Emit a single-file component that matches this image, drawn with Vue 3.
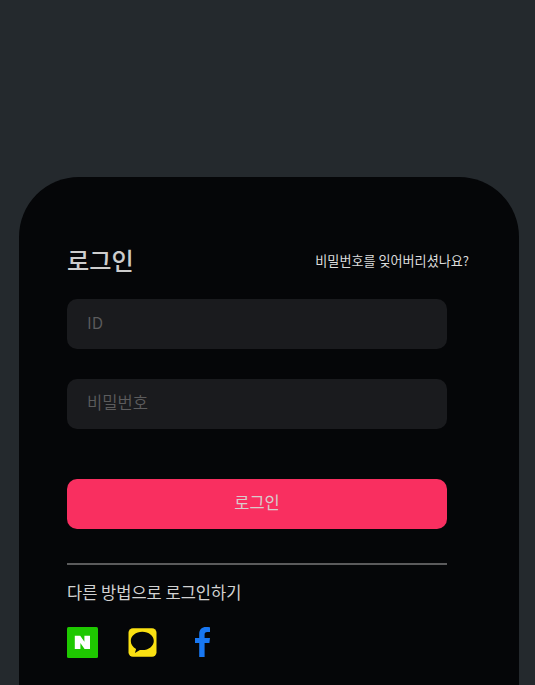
<template>
  <div class="page">
    <main class="login-card">
      <header class="head">
        <h1 class="title">로그인</h1>
        <a class="forgot">비밀번호를 잊어버리셨나요?</a>
      </header>

      <form class="form" @submit.prevent>
        <input v-model="userId" class="field" type="text" placeholder="ID" />
        <input v-model="password" class="field" type="password" placeholder="비밀번호" />
        <button class="submit" type="submit">로그인</button>
      </form>

      <section class="other">
        <p class="other-text">다른 방법으로 로그인하기</p>
        <div class="socials">
          <svg class="naver" viewBox="0 0 31 31" aria-label="Naver">
            <rect width="31" height="31" rx="1.5" fill="#1ec800" />
            <path d="M7.800 8.700h5.400l4.200 6V8.700h5.600v13.400h-5.400l-4.200-6v6H7.800z" fill="#fff" />
          </svg>
          <svg class="kakao" viewBox="0 0 29 29" aria-label="Kakao">
            <rect x=".5" y=".3" width="28" height="28.400" rx="4.500" fill="#fae012" />
            <path
              d="M14.3 3.8C7.9 3.8 2.8 7.8 2.8 13c0 3.4 2.100 6.200 5.300 7.900l-1.200 4.200 5-3.200c.8.1 1.600.2 2.400.2 6.400 0 11.500-4 11.500-9.100s-5.100-9.200-11.500-9.200z"
              fill="#050608"
            />
          </svg>
          <svg class="facebook" viewBox="0 0 15 30" aria-label="Facebook">
            <path
              d="M15 .2v4.9h-2.700C10.200 5.100 9.600 6 9.600 7.500V11H15l-.6 5H9.600v14H4.200V16H0v-5h4.200V6.900C4.200 2.400 6.900 0 11 0c1.700 0 3.200.1 4 .2z"
              fill="#1877f2"
            />
          </svg>
        </div>
      </section>
    </main>
  </div>
</template>

<script setup>
import { ref } from "vue";

const userId = ref("");
const password = ref("");
</script>

<style>
body {
  margin: 0;
  background: #24292d;
}
</style>

<style scoped>
.page {
  box-sizing: border-box;
  height: 685px;
  padding: 177px 16px 0 19px;
  overflow: hidden;
  font-family: "Noto Sans CJK KR", "Noto Sans", sans-serif;
  background: #24292d;
}
.login-card {
  box-sizing: border-box;
  height: 600px;
  padding: 63px 48px 0;
  border-radius: 60px 60px 0 0;
  background: #050608;
}
.head {
  display: flex;
  align-items: center;
  justify-content: space-between;
  height: 40px;
  margin-right: 2px;
}
.title {
  margin: 0;
  font-size: 24.2px;
  font-weight: 500;
  line-height: 40px;
  color: #cdcdcd;
}
.forgot {
  padding-top: 2px;
  font-size: 13.100px;
  line-height: 40px;
  white-space: nowrap;
  color: #dcdcdc;
}
.form {
  display: flex;
  flex-direction: column;
  width: 380px;
  margin-top: 19px;
  padding-bottom: 34px;
  border-bottom: 2px solid #5b5b5c;
}
.field {
  box-sizing: border-box;
  width: 100%;
  height: 50px;
  margin-bottom: 30px;
  padding: 0 20px 4px;
  border: 0;
  border-radius: 10px;
  outline: 0;
  background: #1a1b1e;
  font-family: inherit;
  font-size: 16.6px;
  color: #d2d2d2;
}
.field::placeholder {
  color: #5c5c5d;
  font-weight: 350;
  opacity: 1;
}
.submit {
  height: 50px;
  margin-top: 20px;
  padding: 0 0 5px;
  border: 0;
  border-radius: 10px;
  background: #f92f60;
  font-family: inherit;
  font-size: 16.5px;
  color: #d8cbcb;
}
.other-text {
  margin: 14px 0 0;
  font-size: 16.5px;
  line-height: 26px;
  color: #d2d2d2;
}
.socials {
  display: flex;
  align-items: flex-start;
  margin-top: 22px;
}
.naver {
  width: 31px;
  height: 31px;
}
.kakao {
  width: 29px;
  height: 29px;
  margin: 1px 0 0 30px;
}
.facebook {
  width: 15px;
  height: 30px;
  margin-left: 38px;
}
</style>
